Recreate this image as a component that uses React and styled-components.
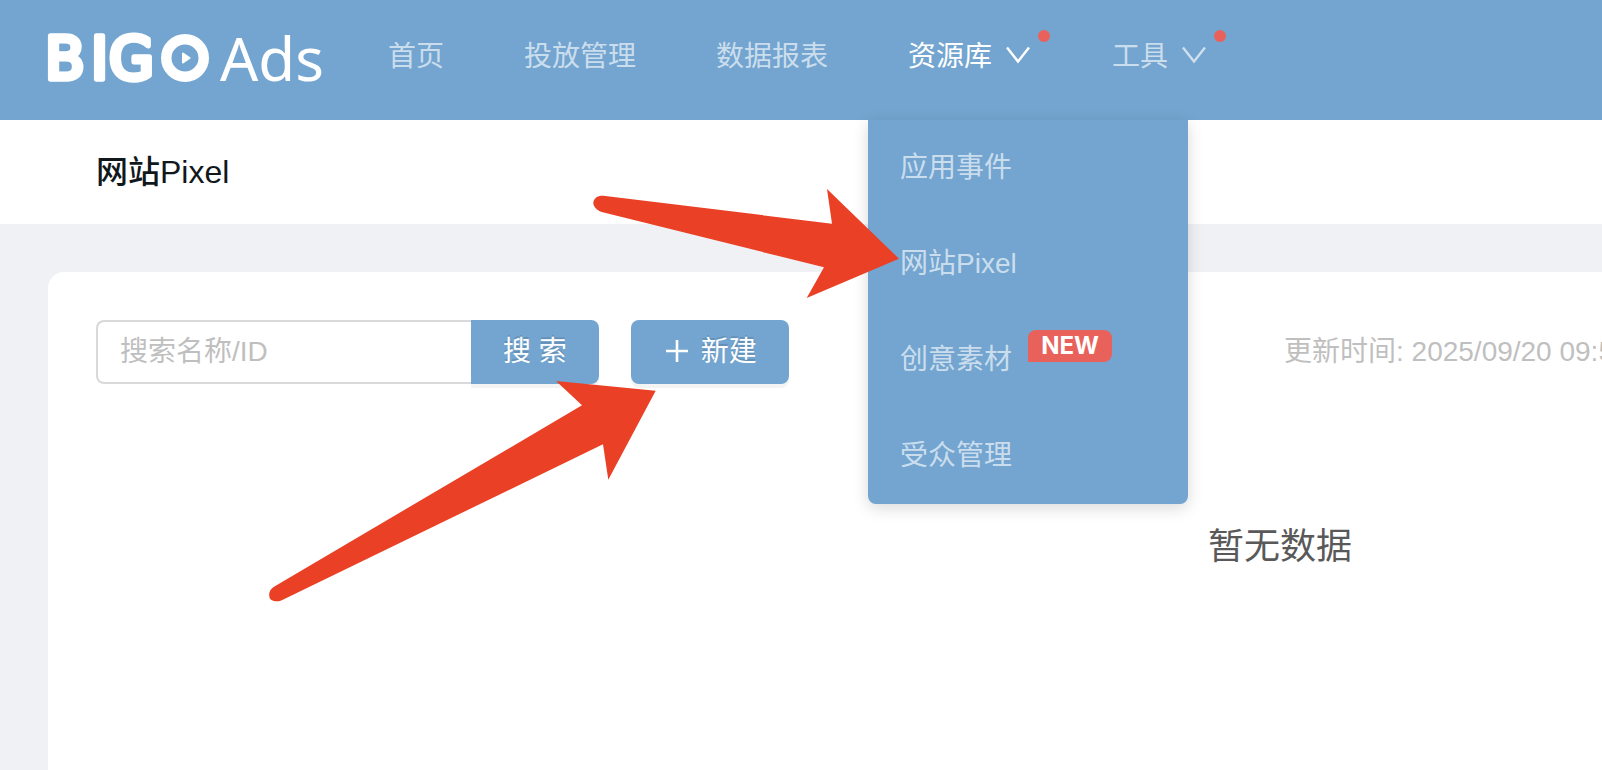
import styled, { createGlobalStyle } from 'styled-components';

const GlobalStyle = createGlobalStyle`
  * {
    box-sizing: border-box;
  }

  html, body {
    margin: 0;
    overflow-x: hidden;
    background: #f0f1f5;
  }

  body, button, input {
    font-family: "Liberation Sans", "Noto Sans CJK SC", sans-serif;
    font-size: 28px;
    line-height: 40px;
  }
`;

const Page = styled.div`
  position: relative;
  display: flex;
  flex-direction: column;
  min-height: 100vh;
  overflow: hidden;
`;

const Header = styled.header`
  display: flex;
  height: 120px;
  padding: 0 48px 6px;
  background: #73a5d0;
`;

const LogoLink = styled.a`
  display: flex;
  align-items: center;
  width: 300px;
`;

const LogoSvg = styled.svg`
  display: block;
  width: 280px;
  height: 64px;
  overflow: visible;
`;

const Nav = styled.nav`
  display: flex;
`;

const NavItem = styled.div`
  position: relative;
  display: flex;
  padding: 0 40px;
`;

const NavLink = styled.a`
  position: relative;
  display: flex;
  align-items: center;
  gap: 12px;
  color: ${(props) => (props.$active ? '#fff' : 'rgba(255, 255, 255, 0.65)')};
  text-decoration: none;
  white-space: nowrap;
`;

const Dot = styled.span`
  position: absolute;
  top: 30px;
  right: -18px;
  width: 12px;
  height: 12px;
  border-radius: 50%;
  background: #e8625b;
`;

const Menu = styled.div`
  position: absolute;
  top: 120px;
  left: 0;
  z-index: 2;
  width: 320px;
  border-radius: 0 0 8px 8px;
  background: #73a5d0;
  box-shadow: 0 4px 16px rgba(0, 0, 0, 0.15);
`;

const MenuLink = styled.a`
  display: flex;
  align-items: center;
  gap: 16px;
  height: 96px;
  padding: 0 32px;
  color: rgba(255, 255, 255, 0.65);
  text-decoration: none;
`;

const NewBadge = styled.span`
  align-self: flex-start;
  width: 84px;
  margin-top: 18px;
  border-radius: 8px 8px 8px 0;
  background: #e8625b;
  color: #fff;
  font-family: Inter, sans-serif;
  font-size: 24px;
  font-weight: 700;
  line-height: 32px;
  text-align: center;
`;

const TitleBar = styled.div`
  display: flex;
  align-items: center;
  height: 104px;
  padding: 0 96px;
  background: #fff;
`;

const Title = styled.h1`
  margin: 0;
  color: #11181c;
  font-size: 32px;
  font-weight: 500;
`;

const Content = styled.main`
  display: flex;
  flex: 1;
  padding: 48px 0 0 48px;
`;

const Card = styled.section`
  flex: 1 0 auto;
  min-width: 2464px;
  padding: 48px;
  border-radius: 16px 16px 0 0;
  background: #fff;
`;

const Toolbar = styled.div`
  display: grid;
  grid-template-columns: 1fr 1fr;
  gap: 8px;
  align-items: center;
`;

const Actions = styled.div`
  display: flex;
  gap: 32px;
`;

const SearchForm = styled.form`
  display: flex;
`;

const SearchInput = styled.input`
  width: 375px;
  height: 64px;
  padding: 0 22px;
  border: 2px solid #d9d9d9;
  border-right: 0;
  border-radius: 8px 0 0 8px;
  outline: none;
  background: #fff;

  &::placeholder {
    color: #bfbfbf;
    opacity: 1;
  }
`;

const Button = styled.button`
  display: flex;
  align-items: center;
  gap: 10px;
  height: 64px;
  padding: 0 32px;
  border: 0;
  border-radius: ${(props) => (props.$attached ? '0 8px 8px 0' : '8px')};
  background: #73a5d0;
  box-shadow: 0 4px 0 rgba(0, 0, 0, 0.045);
  color: #fff;
  text-shadow: 0 -2px 0 rgba(0, 0, 0, 0.12);
  white-space: nowrap;
`;

const UpdateTime = styled.span`
  color: #bfbfbf;
  white-space: nowrap;
`;

const Empty = styled.p`
  margin: 136px 0 0;
  color: #595959;
  font-size: 36px;
  line-height: 54px;
  text-align: center;
`;

const Pointer = styled.svg`
  position: absolute;
  top: ${(props) => props.$top}px;
  left: ${(props) => props.$left}px;
  z-index: 3;
  fill: #ea4025;
  pointer-events: none;
`;

function Logo() {
  return (
    <LogoSvg viewBox="0 0 280 64" fill="#fff" role="img" aria-label="BIGO Ads">
      <text
        x="-3 43 61"
        y="54"
        fontFamily="'DejaVu Sans', sans-serif"
        fontSize="58"
        stroke="#fff"
        strokeWidth="5.5"
        strokeLinejoin="round"
      >
        BIG
      </text>
      <circle cx="137" cy="33" r="18.75" fill="none" stroke="#fff" strokeWidth="10.5" />
      <path
        d="M135 28.5v9l6.5-4.5z"
        stroke="#fff"
        strokeWidth="2"
        strokeLinejoin="round"
      />
      <text
        x="172"
        y="56"
        fontFamily="'Noto Sans', sans-serif"
        fontSize="60"
      >
        Ads
      </text>
    </LogoSvg>
  );
}

function Chevron() {
  return (
    <svg width="28" height="28" viewBox="0 0 28 28" fill="none" stroke="currentColor" strokeWidth="2.4">
      <path d="M3 4.5L14 18.5L25 4.5" />
    </svg>
  );
}

function PlusIcon() {
  return (
    <svg width="28" height="28" viewBox="0 0 28 28" fill="none" stroke="currentColor" strokeWidth="2.6">
      <path d="M14 2v22M3 13h22" />
    </svg>
  );
}

const menuItems = [
  { label: '应用事件' },
  { label: '网站Pixel' },
  { label: '创意素材', isNew: true },
  { label: '受众管理' },
];

const navItems = [
  { label: '首页' },
  { label: '投放管理' },
  { label: '数据报表' },
  { label: '资源库', active: true, children: menuItems },
  { label: '工具', children: [] },
];

function App() {
  return (
    <Page>
      <GlobalStyle />
      <Header>
        <LogoLink href="#">
          <Logo />
        </LogoLink>
        <Nav>
          {navItems.map((item) => (
            <NavItem key={item.label}>
              <NavLink href="#" $active={item.active}>
                {item.label}
                {item.children && <Chevron />}
                {item.children && <Dot />}
              </NavLink>
              {item.active && (
                <Menu>
                  {item.children.map((child) => (
                    <MenuLink href="#" key={child.label}>
                      {child.label}
                      {child.isNew && <NewBadge>NEW</NewBadge>}
                    </MenuLink>
                  ))}
                </Menu>
              )}
            </NavItem>
          ))}
        </Nav>
      </Header>

      <TitleBar>
        <Title>网站Pixel</Title>
      </TitleBar>

      <Content>
        <Card>
          <Toolbar>
            <Actions>
              <SearchForm>
                <SearchInput type="text" placeholder="搜索名称/ID" aria-label="搜索名称/ID" />
                <Button type="button" $attached>搜 索</Button>
              </SearchForm>
              <Button type="button">
                <PlusIcon />
                新建
              </Button>
            </Actions>
            <UpdateTime>更新时间: 2025/09/20 09:5</UpdateTime>
          </Toolbar>
          <Empty>暂无数据</Empty>
        </Card>
      </Content>

      <Pointer $top={188} $left={592} width="308" height="112" viewBox="592 188 308 112">
        <path d="M603.3 195.7L832 223.7L827 189L899 258.7L806.7 298L824 267.3L601.7 212C596.5 210 593.3 206.5 593.3 202.7C593.8 198 598 195.3 603.3 195.7Z" />
      </Pointer>
      <Pointer $top={380} $left={268} width="388" height="222" viewBox="268 380 388 222">
        <path d="M274 586.7L582 405.3L556 381L655.7 390.7L608.3 479.7L603 444.3L282.3 600C279 602 273 602 270 598.7C268 594 269.5 589.5 274 586.7Z" />
      </Pointer>
    </Page>
  );
}

export default App;
